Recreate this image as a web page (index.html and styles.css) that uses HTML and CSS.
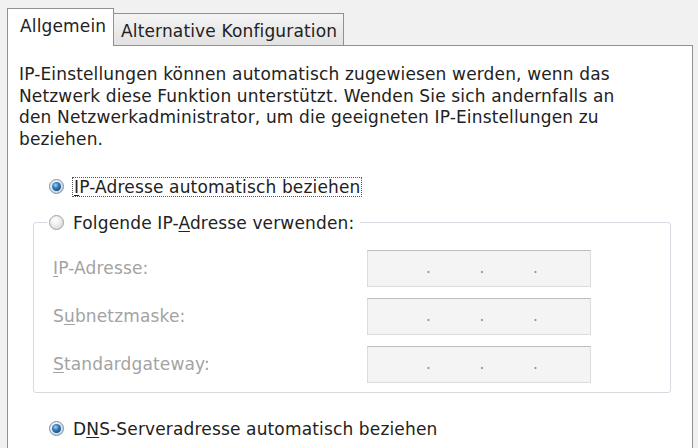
FILE: index.html
```html
<!DOCTYPE html>
<html lang="de">
<head>
<meta charset="utf-8">
<title>Eigenschaften von Internetprotokoll Version 4</title>
<link rel="stylesheet" href="styles.css">
</head>
<body>
<div class="dialog">
  <div class="tabs">
    <div class="tab active">Allgemein</div>
    <div class="tab">Alternative Konfiguration</div>
  </div>
  <div class="panel">
    <p class="intro">IP-Einstellungen können automatisch zugewiesen werden, wenn das<br>Netzwerk diese Funktion unterstützt. Wenden Sie sich andernfalls an<br>den Netzwerkadministrator, um die geeigneten IP-Einstellungen zu<br>beziehen.</p>
    <div class="option first">
      <span class="radio checked"></span>
      <span class="label focus"><u>I</u>P-Adresse automatisch beziehen</span>
    </div>
    <fieldset class="group">
      <legend class="option">
        <span class="radio"></span>
        <span class="label">Folgende IP-<u>A</u>dresse verwenden:</span>
      </legend>
      <div class="field">
        <span class="flabel"><u>I</u>P-Adresse:</span>
        <span class="ipbox"><span>.</span><span>.</span><span>.</span></span>
      </div>
      <div class="field">
        <span class="flabel">S<u>u</u>bnetzmaske:</span>
        <span class="ipbox"><span>.</span><span>.</span><span>.</span></span>
      </div>
      <div class="field">
        <span class="flabel"><u>S</u>tandardgateway:</span>
        <span class="ipbox"><span>.</span><span>.</span><span>.</span></span>
      </div>
    </fieldset>
    <div class="option dns">
      <span class="radio checked"></span>
      <span class="label">D<u>N</u>S-Serveradresse automatisch beziehen</span>
    </div>
  </div>
</div>
</body>
</html>
```
FILE: styles.css
```css
html, body {
  margin: 0;
  padding: 0;
  height: 100%;
  overflow: hidden;
}
body {
  background: #f1f1f1;
  font-family: "DejaVu Sans", "Open Sans", sans-serif;
  font-size: 17px;
  letter-spacing: 0.15px;
  color: #222222;
}
.dialog {
  display: flex;
  flex-direction: column;
  height: 100%;
  box-sizing: border-box;
  padding: 8px 5px 0 7px;
}
.tabs {
  display: flex;
  align-items: flex-end;
  height: 37px;
}
.tab {
  box-sizing: border-box;
  height: 32px;
  width: 230px;
  border: 1px solid #8e9197;
  border-left: none;
  border-bottom: none;
  background: linear-gradient(#f4f4f4, #e2e2e2);
  display: flex;
  align-items: center;
  padding-left: 7px;
  padding-top: 2px;
  white-space: nowrap;
}
.tab.active {
  position: relative;
  z-index: 1;
  width: 107px;
  height: 38px;
  margin-bottom: -1px;
  border-left: 1px solid #8e9197;
  background: #ffffff;
  padding-left: 12px;
  padding-top: 0;
  padding-bottom: 3px;
}
.panel {
  flex: 1;
  background: #ffffff;
  border: 1px solid #8e9197;
  border-bottom: none;
  padding: 18px 0 0 11px;
}
.intro {
  margin: 0;
  line-height: 21.7px;
  white-space: nowrap;
}
.option {
  display: flex;
  align-items: center;
  height: 36px;
  white-space: nowrap;
}
.option.first {
  margin-top: 18px;
  padding-left: 30px;
}
.option.dns {
  margin-top: 18px;
  padding-left: 30px;
}
.radio {
  flex: none;
  box-sizing: border-box;
  width: 15px;
  height: 15px;
  border-radius: 50%;
  border: 1px solid #9ca2a9;
  background: radial-gradient(circle at 40% 35%, #ffffff 0%, #ececec 45%, #cdcdcd 100%);
  display: flex;
  align-items: center;
  justify-content: center;
  margin-right: 9px;
}
.radio.checked {
  border-color: #7d91a6;
  background: radial-gradient(circle at 40% 35%, #ffffff 0%, #dfe7ef 50%, #afbdcb 100%);
}
.radio.checked::after {
  content: "";
  width: 9px;
  height: 9px;
  border-radius: 50%;
  background: radial-gradient(circle at 40% 35%, #a9d6f7 0%, #3a80bd 35%, #174e80 75%, #0e355a 100%);
}
.label u, .flabel u {
  text-decoration-thickness: 1px;
  text-underline-offset: 2px;
}
.focus {
  outline: 1px dotted #555;
  outline-offset: 0;
  padding: 0 1px;
  line-height: 18px;
}
.group {
  box-sizing: border-box;
  width: 638px;
  margin: 0 0 0 14px;
  padding: 9px 0 9px 19px;
  border: 1px solid #d5dbe0;
  border-radius: 3px;
}
.group legend.option {
  margin-left: -6px;
  padding: 0 6px 0 2px;
}
.field {
  display: flex;
  align-items: center;
  height: 37px;
  margin-bottom: 11px;
}
.field:last-child {
  margin-bottom: 0;
}
.flabel {
  width: 314px;
  color: #a3a3a3;
  white-space: nowrap;
}
.ipbox {
  box-sizing: border-box;
  width: 224px;
  height: 37px;
  background: #f4f4f4;
  border: 1px solid #dcdcdc;
  border-top-color: #bdbdbd;
  display: flex;
  padding: 8px 0 0 58px;
  color: #8c8c8c;
  font-size: 15px;
}
.ipbox span {
  width: 53.5px;
}
```
